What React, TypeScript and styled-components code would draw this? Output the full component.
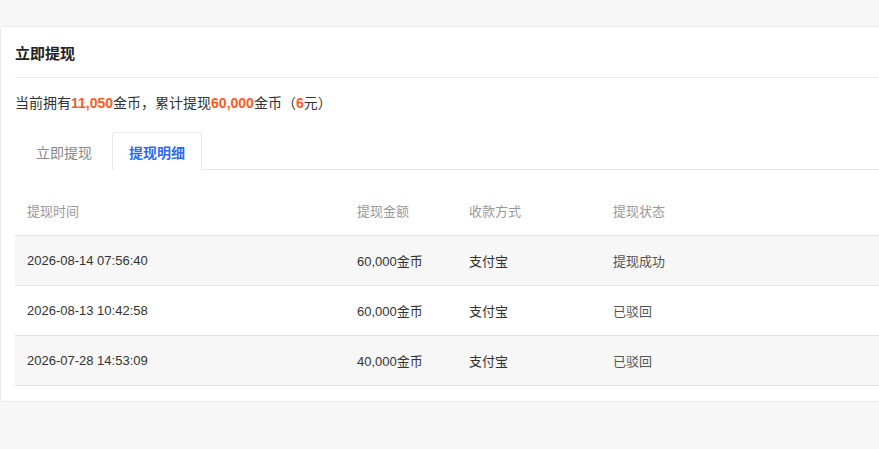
import { createGlobalStyle } from 'styled-components'
import styled from 'styled-components'

const GlobalStyle = createGlobalStyle`
    html, body {
        margin: 0;
        padding: 0;
        background: #f7f7f7;
        overflow: hidden;
    }
    body {
        font-family: "Liberation Sans", Arial, "Noto Sans CJK SC", sans-serif;
        color: #333;
    }
`

const Page = styled.div`
    padding-top: 26px;
    width: 900px;
    height: 449px;
    box-sizing: border-box;
`

const Card = styled.div`
    background: #fff;
    border: 1px solid #ebebeb;
    border-radius: 3px;
    padding: 0 0 15px 14px;
`

const CardHeader = styled.div`
    height: 50px;
    display: flex;
    align-items: center;
    font-size: 15px;
    font-weight: bold;
    color: #222;
    border-bottom: 1px solid #ebebeb;
`

const Summary = styled.div`
    font-size: 14px;
    color: #333;
    padding: 17px 0 0;
    height: 37px;
    line-height: 17px;
    box-sizing: border-box;
`

const Num = styled.span`
    color: #ff5a1f;
    font-weight: bold;
`

const Tabs = styled.div`
    display: flex;
    align-items: flex-end;
    margin-top: 16px;
    height: 38px;
    border-bottom: 1px solid #e8e8e8;
`

const Tab = styled.div<{ $active?: boolean }>`
    height: 38px;
    box-sizing: border-box;
    padding: ${p => (p.$active ? '0 16px' : '0 19px 0 20px')};
    display: flex;
    align-items: center;
    font-size: 14px;
    color: ${p => (p.$active ? '#2f6bf2' : '#888')};
    font-weight: ${p => (p.$active ? 'bold' : 'normal')};
    border: 1px solid ${p => (p.$active ? '#e8e8e8' : 'transparent')};
    border-bottom: none;
    border-radius: 3px 3px 0 0;
    background: #fff;
    margin-bottom: -1px;
`

const Table = styled.div`
    margin-top: 15px;
`

const Row = styled.div<{ $striped?: boolean; $head?: boolean }>`
    display: grid;
    grid-template-columns: 330px 112px 144px 1fr;
    align-items: center;
    height: ${p => (p.$head ? '50px' : '49px')};
    padding-left: 12px;
    font-size: 13px;
    color: ${p => (p.$head ? '#999' : '#333')};
    background: ${p => (p.$striped ? '#f7f7f7' : '#fff')};
    border-bottom: 1px solid #e3e3e3;
`

const Cell = styled.div`
    white-space: nowrap;
`

const StatusCell = styled(Cell)`
    color: #555;
`

const records = [
    { time: '2026-08-14 07:56:40', amount: '60,000金币', method: '支付宝', status: '提现成功' },
    { time: '2026-08-13 10:42:58', amount: '60,000金币', method: '支付宝', status: '已驳回' },
    { time: '2026-07-28 14:53:09', amount: '40,000金币', method: '支付宝', status: '已驳回' },
]

export default function App() {
    return (
        <>
            <GlobalStyle />
            <Page>
                <Card>
                    <CardHeader>立即提现</CardHeader>
                    <Summary>
                        当前拥有<Num>11,050</Num>金币，累计提现<Num>60,000</Num>金币（<Num>6</Num>元）
                    </Summary>
                    <Tabs>
                        <Tab>立即提现</Tab>
                        <Tab $active>提现明细</Tab>
                    </Tabs>
                    <Table>
                        <Row $head>
                            <Cell>提现时间</Cell>
                            <Cell>提现金额</Cell>
                            <Cell>收款方式</Cell>
                            <Cell>提现状态</Cell>
                        </Row>
                        {records.map((r, i) => (
                            <Row key={r.time} $striped={i % 2 === 0}>
                                <Cell>{r.time}</Cell>
                                <Cell>{r.amount}</Cell>
                                <Cell>{r.method}</Cell>
                                <StatusCell>{r.status}</StatusCell>
                            </Row>
                        ))}
                    </Table>
                </Card>
            </Page>
        </>
    )
}
